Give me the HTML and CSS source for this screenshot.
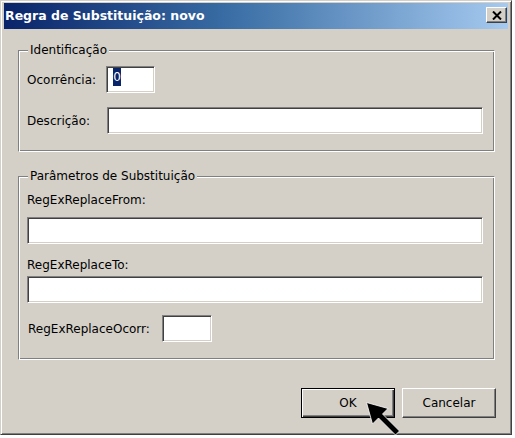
FILE: index.html
```html
<!DOCTYPE html>
<html lang="pt">
<head>
<meta charset="utf-8">
<title>Regra de Substituição: novo</title>
<link rel="stylesheet" href="styles.css">
</head>
<body>
<div class="window">
  <div class="titlebar">
    <span class="title">Regra de Substituição: novo</span>
    <button class="close" type="button" aria-label="Fechar">
      <svg width="10" height="9" viewBox="0 0 10 9"><path d="M1 0.5 L9 8.5 M9 0.5 L1 8.5" stroke="#000" stroke-width="2" fill="none"/></svg>
    </button>
  </div>
  <div class="content">
    <fieldset class="group g1">
      <legend>Identificação</legend>
      <div class="row">
        <label class="lbl lbl-id">Ocorrência:</label>
        <div class="field f-occ"><span class="sel">0</span></div>
      </div>
      <div class="row r-desc">
        <label class="lbl lbl-id">Descrição:</label>
        <input class="field f-desc" type="text">
      </div>
    </fieldset>
    <fieldset class="group g2">
      <legend>Parâmetros de Substituição</legend>
      <label class="lbl blk">RegExReplaceFrom:</label>
      <input class="field wide m-from" type="text">
      <label class="lbl blk m-tolbl">RegExReplaceTo:</label>
      <input class="field wide m-to" type="text">
      <div class="row m-ocorr">
        <label class="lbl lbl-ocorr">RegExReplaceOcorr:</label>
        <input class="field f-ocorr" type="text">
      </div>
    </fieldset>
    <div class="buttons">
      <button class="btn btn-default" type="button">OK</button>
      <button class="btn" type="button">Cancelar</button>
    </div>
  </div>
  <svg class="cursor" width="36" height="36" viewBox="0 0 36 36">
    <polygon points="0.5,0.5 22,6.5 16.5,12 33.5,29 29.5,33 12.5,16 6.5,22" fill="#000" stroke="#fff" stroke-width="0.8"/>
  </svg>
</div>
</body>
</html>
```

FILE: styles.css
```css
html, body {
  margin: 0;
  padding: 0;
  background: #ffffff;
}

body {
  font-family: "DejaVu Sans", "Liberation Sans", sans-serif;
  font-size: 12px;
  color: #000;
}

.window {
  position: relative;
  width: 512px;
  height: 435px;
  box-sizing: border-box;
  background: #d4d0c8;
  border: 1px solid;
  border-color: #d4d0c8 #404040 #404040 #d4d0c8;
  box-shadow: inset 1px 1px 0 #ffffff, inset -1px -1px 0 #808080;
  padding: 2px 3px 3px 3px;
  display: flex;
  flex-direction: column;
}

.titlebar {
  height: 26px;
  display: flex;
  align-items: flex-start;
  justify-content: space-between;
  background: linear-gradient(to right, #0a246a 0%, #3a6ea5 45%, #a6caf0 100%);
}

.title {
  color: #ffffff;
  font-weight: bold;
  font-size: 12.5px;
  line-height: 26px;
  padding-left: 1px;
  white-space: nowrap;
}

.close {
  margin: 4px 1px 0 0;
  width: 21px;
  height: 16px;
  padding: 0;
  box-sizing: border-box;
  background: #d4d0c8;
  border: 1px solid;
  border-color: #ffffff #404040 #404040 #ffffff;
  box-shadow: inset -1px -1px 0 #808080;
  display: flex;
  align-items: center;
  justify-content: center;
}

.close svg {
  display: block;
}

.content {
  display: flex;
  flex-direction: column;
  padding: 15px 13px 0 14px;
}

.group {
  margin: 0;
  min-width: 0;
  border: 1px solid;
  border-color: #808080 #ffffff #ffffff #808080;
  box-shadow: inset 1px 1px 0 #ffffff, inset -1px -1px 0 #808080;
  padding: 9px 11px 17px 8px;
}

.group legend {
  margin-left: 1px;
  padding: 0 2px;
  line-height: 13px;
  background: #d4d0c8;
}

.g2 {
  margin-top: 18px;
  padding-top: 10px;
}

.row {
  display: flex;
  align-items: center;
}

.r-desc {
  margin-top: 14px;
}

.lbl {
  line-height: 14px;
  white-space: nowrap;
}

.lbl-id {
  width: 79px;
  flex: none;
}

.blk {
  display: block;
}

.field {
  box-sizing: border-box;
  height: 27px;
  margin: 0;
  padding: 0;
  background: #ffffff;
  border: 1px solid;
  border-color: #808080 #ffffff #ffffff #808080;
  box-shadow: inset 1px 1px 0 #404040, inset -1px -1px 0 #d4d0c8;
  font: inherit;
  outline: none;
  -webkit-appearance: none;
  appearance: none;
}

.f-occ {
  width: 49px;
  padding: 1px 0 0 6px;
  display: flex;
  align-items: flex-start;
}

.sel {
  display: block;
  width: 8px;
  height: 18px;
  line-height: 18px;
  text-align: center;
  background: #0a246a;
  color: #ffffff;
}

.f-desc {
  flex: 1;
  min-width: 0;
  margin-left: 1px;
}

.wide {
  display: block;
  width: 100%;
}

.m-from {
  margin-top: 10px;
}

.m-tolbl {
  margin-top: 14px;
}

.m-to {
  margin-top: 4px;
}

.m-ocorr {
  margin-top: 12px;
}

.lbl-ocorr {
  width: 134px;
  padding-left: 1px;
  flex: none;
}

.f-ocorr {
  width: 50px;
}

.buttons {
  display: flex;
  justify-content: flex-end;
  gap: 7px;
  margin-top: 28px;
  margin-right: -1px;
}

.btn {
  width: 94px;
  height: 30px;
  box-sizing: border-box;
  padding: 0;
  font: inherit;
  color: #000;
  background: #d4d0c8;
  border: 1px solid;
  border-color: #ffffff #404040 #404040 #ffffff;
  box-shadow: inset -1px -1px 0 #808080;
}

.btn-default {
  border: 1px solid #000000;
  box-shadow: inset 1px 1px 0 #ffffff, inset -1px -1px 0 #404040, inset -2px -2px 0 #808080;
}

.cursor {
  position: absolute;
  left: 365px;
  top: 401px;
}
```
